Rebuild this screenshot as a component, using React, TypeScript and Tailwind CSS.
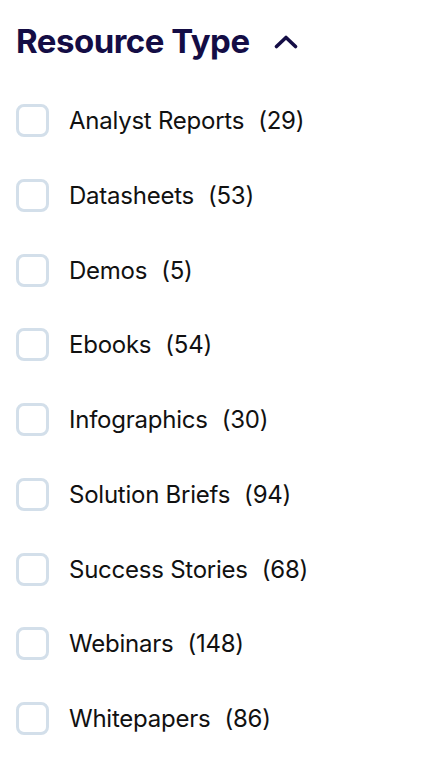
import React, { useState } from 'react'

const types = [
  { label: 'Analyst Reports', count: 29 },
  { label: 'Datasheets', count: 53 },
  { label: 'Demos', count: 5 },
  { label: 'Ebooks', count: 54 },
  { label: 'Infographics', count: 30 },
  { label: 'Solution Briefs', count: 94 },
  { label: 'Success Stories', count: 68 },
  { label: 'Webinars', count: 148 },
  { label: 'Whitepapers', count: 86 },
]

export default function App(): React.ReactElement {
  const [checked, setChecked] = useState<Record<string, boolean>>({})

  return (
    <div className="min-h-[760px] w-[444px] bg-white pl-4 pt-[19px]" style={{ fontFamily: 'Inter, "Noto Sans", sans-serif' }}>
      {/* Section header */}
      <button className="flex items-center gap-[24px] text-[#140d45]">
        <span className="text-[33px] font-bold tracking-[-0.015em] leading-[44px]">Resource Type</span>
        <svg width="24" height="14" viewBox="0 0 24 14" fill="none" className="mt-[2px]">
          <path d="M2.5 11.5 12 2.5l9.5 9" stroke="currentColor" strokeWidth="3.6" strokeLinecap="round" strokeLinejoin="round" />
        </svg>
      </button>

      {/* Options */}
      <ul className="mt-[41px] flex flex-col gap-[41.75px]">
        {types.map((t) => (
          <li key={t.label}>
            <label className="flex items-center cursor-pointer select-none">
              <input
                type="checkbox"
                className="peer sr-only"
                checked={!!checked[t.label]}
                onChange={() => setChecked((c) => ({ ...c, [t.label]: !c[t.label] }))}
              />
              <span className="h-[33px] w-[33px] rounded-[8px] border-[3px] border-[#d3dfea] bg-white shrink-0" />
              <span className="ml-[20px] text-[24px] leading-[33px] text-[#111111] tracking-[-0.01em]">
                {t.label}
                <span className="ml-[14px]">({t.count})</span>
              </span>
            </label>
          </li>
        ))}
      </ul>
    </div>
  )
}
